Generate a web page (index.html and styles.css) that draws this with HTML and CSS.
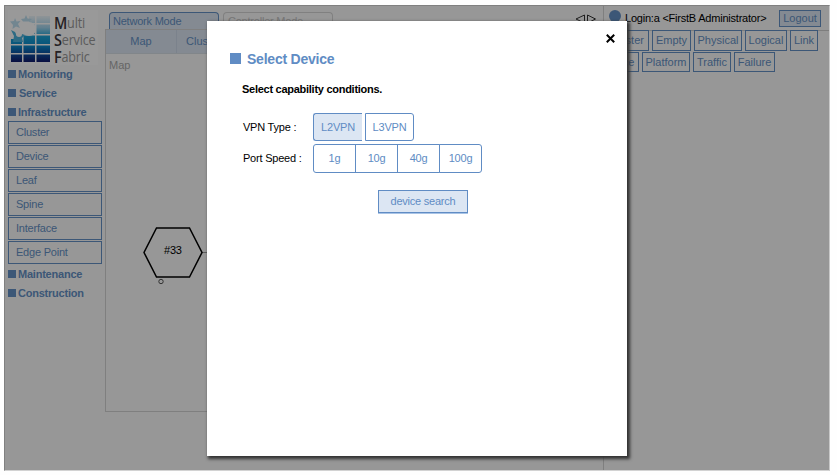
FILE: index.html
```html
<!DOCTYPE html>
<html lang="en">
<head>
<meta charset="utf-8">
<title>Multi Service Fabric</title>
<link rel="stylesheet" href="styles.css">
</head>
<body>
<div class="app">
  <nav class="sidebar">
    <div class="brand">
      <svg class="logo" width="90" height="55" viewBox="0 0 90 55">
        <defs><linearGradient id="g" gradientUnits="userSpaceOnUse" x1="0" y1="6" x2="0" y2="52"><stop offset="0" stop-color="#eef7fc"/><stop offset=".25" stop-color="#a5d6ee"/><stop offset=".45" stop-color="#1ba3d6"/><stop offset=".65" stop-color="#0c8acb"/><stop offset=".8" stop-color="#0d55a5"/><stop offset="1" stop-color="#111a6c"/></linearGradient></defs>
        <rect width="90" height="55" fill="#fff"/>
        <path fill="url(#g)" d="M16 6h11v7H16zM28.500 6H42v7H28.500zM16 14.500h11V24H16zM28.500 14.500H42V24H28.500zM3 25.500h11V34H3zM15.500 25.500H27V34H15.500zM28.500 25.500H42V34H28.500zM3 35.500h11V43H3zM15.500 35.500H27V43H15.500zM28.500 35.500H42V43H28.500zM3 44.500h11V52H3zM15.500 44.500H27V52H15.500zM28.500 44.500H42V52H28.500z"/>
        <path fill="#fff" d="M0 23h14v6H0zM13 4h8v10h-8z"/>
        <circle cx="21" cy="19" r="7" fill="#fff"/>
        <path fill="#bfe0f1" d="M7 8l1.500 3.500 4-.5-2.500 3 2 4-4-1.500-3.500 2.500.5-4L2 11.500l4-.5zM18 5l1.500 3.500L24 9l-3 2.500h-6L13 9l3.500-.5z"/>
        <path fill="#4bb3dc" d="M3 20l4 2 2 4 5-2 3 1-3 3 1 4H5l1-6z"/>
        <circle cx="11" cy="24" r="3" fill="#fff"/>
      </svg>
      <div class="brand-name"><div><b>M</b>ulti</div><div><b>S</b>ervice</div><div><b>F</b>abric</div></div>
    </div>
    <div class="heading">Monitoring</div>
    <div class="heading indent">Service</div>
    <div class="heading">Infrastructure</div>
    <ul class="menu"><li>Cluster</li><li>Device</li><li>Leaf</li><li>Spine</li><li>Interface</li><li>Edge Point</li></ul>
    <div class="heading">Maintenance</div>
    <div class="heading">Construction</div>
  </nav>
  <main class="work">
    <div class="modes"><div class="mode active">Network Mode</div><div class="mode">Controller Mode</div>
      <svg class="arrows" width="22" height="10" viewBox="0 0 22 10"><path d="M9.500 1v8L1 5zM12.500 1v8L20.500 5z" fill="none" stroke="#333"/></svg>
    </div>
    <div class="map">
      <div class="tabs"><div class="tab">Map</div><div class="tab second">Cluster</div></div>
      <div class="map-label">Map</div>
      <svg class="diagram" width="120" height="62" viewBox="0 0 120 62">
        <path d="M60 27.500h60" stroke="#999"/>
        <path d="M14.500 3h33L60 27.500 47.500 52h-33L2 27.500z" fill="none" stroke="#000" stroke-width="1.500"/>
        <text x="22" y="29">#33</text>
        <circle cx="19" cy="56.500" r="2.200" fill="none" stroke="#555"/>
      </svg>
    </div>
  </main>
  <aside class="panel">
    <div class="user"><span class="avatar"></span><span class="login">Login:a &lt;FirstB Administrator&gt;</span><button class="logout">Logout</button></div>
    <div class="filters row-one"><span class="w-cluster">Cluster</span><span class="w-empty">Empty</span><span class="w-physical">Physical</span><span class="w-logical">Logical</span><span class="w-link">Link</span></div>
    <div class="filters row-two"><span class="w-device">Device</span><span class="w-platform">Platform</span><span class="w-traffic">Traffic</span><span class="w-failure">Failure</span></div>
  </aside>
  <div class="shade"></div>
</div>
<section class="dialog">
  <svg class="close" width="9" height="9" viewBox="0 0 9 9"><path d="M.8.8l7.400 7.400M8.200.8L.8 8.200" stroke="#000" stroke-width="2"/></svg>
  <h1>Select Device</h1>
  <h2>Select capability conditions.</h2>
  <div class="field vpn"><label>VPN Type :</label><div class="choices"><button class="on">L2VPN</button><button>L3VPN</button></div></div>
  <div class="field speed"><label>Port Speed :</label><div class="choices"><button>1g</button><button>10g</button><button>40g</button><button>100g</button></div></div>
  <button class="search">device search</button>
</section>
</body>
</html>
```

FILE: styles.css
```css
* { box-sizing: border-box; }
body { margin: 0; width: 837px; height: 475px; overflow: hidden; background: #fefefe; font: 11px/13px "Liberation Sans", Arial, sans-serif; letter-spacing: -.22px; color: #000; }
button { font: inherit; letter-spacing: inherit; padding: 0; margin: 0; }
.app { position: relative; display: flex; width: 826px; height: 466px; margin: 5px 0 0 4px; background: #fcfcfc; border: 1px solid; border-color: #808080 #c8c8c8 #d2d2d2 #808080; overflow: hidden; }
.shade { position: absolute; inset: 0; background: rgba(0, 0, 0, .4); }
.sidebar { width: 100px; flex: none; padding: 4px 0 0 3px; color: #6591c6; }
.brand { display: flex; position: relative; width: 90px; height: 55px; }
.brand-name { position: absolute; left: 46px; top: 4px; color: #999; font: 14px/17px "Open Sans", sans-serif; letter-spacing: -.2px; transform: scaleX(.9); transform-origin: 0 0; }
.brand-name div { display: flex; align-items: center; height: 17px; line-height: 14px; }
.brand-name b { color: #40383c; font-size: 16px; font-weight: 600; }
.heading { display: flex; align-items: center; height: 19px; font-weight: bold; gap: 2px; white-space: nowrap; }
.heading::before { content: ""; width: 8px; height: 8px; margin-top: -1px; background: #6591c6; }
.indent { gap: 3px; }
.menu { list-style: none; margin: -1px 0 0; padding: 0; display: grid; gap: 1px; }
.menu li { width: 94px; height: 23px; border: 1px solid #6591c6; padding: 4px 0 0 7px; }
.menu + .heading { margin-top: 1px; }
.work { width: 498px; flex: none; color: #6591c6; }
.modes { display: flex; height: 23px; padding: 6px 0 0 4px; gap: 4px; position: relative; }
.mode { width: 110px; height: 17px; border: 1px solid #d5d5d5; border-bottom: 0; border-radius: 4px 4px 0 0; color: #c5c5c5; padding: 2px 0 0 4px; line-height: 13px; white-space: nowrap; }
.mode.active { border-color: #6591c6; background: #dce6f3; color: #6591c6; padding-left: 3px; }
.arrows { position: absolute; left: 470px; top: 8px; }
.map { height: 383px; border: 1px solid #d4d4d4; border-right: 0; }
.tabs { display: flex; height: 24px; background: #dce6f3; color: #6591c6; border-bottom: 1px solid #d8dfe7; }
.tab { width: 71px; padding-top: 5px; text-align: center; border-right: 1px solid #cdd9e9; letter-spacing: 0; }
.tab.second { text-align: left; padding-left: 9px; }
.map-label { padding: 5px 0 0 3px; color: #aaa; letter-spacing: 0; }
.diagram { display: block; margin: 153px 0 0 36px; }
.diagram text { font: 11px "Liberation Sans", Arial, sans-serif; }
.panel { flex: 1; border-left: 1px solid #d4d4d4; }
.user { display: flex; height: 25px; padding: 4px 0 0 5px; border-bottom: 1px solid #d0d0d0; white-space: nowrap; }
.avatar { width: 12px; height: 12px; border-radius: 50%; background: #6591c6; }
.login { width: 154px; margin: 2px 0 0 4px; }
.logout { width: 42px; height: 17px; background: #dce6f3; border: 1px solid #6591c6; color: #6591c6; letter-spacing: 0; }
.filters { display: flex; gap: 3px; color: #6591c6; letter-spacing: 0; }
.filters span { height: 20px; border: 1px solid #6591c6; text-align: center; line-height: 18px; overflow: hidden; }
.filters.row-one span { height: 21px; line-height: 19px; }
.row-one { margin: -1px 0 0 0; }
.row-two { margin: 1px 0 0 -8px; }
.w-cluster { width: 45px; }
.w-empty { width: 39px; }
.w-physical { width: 48px; }
.w-logical { width: 42px; }
.w-link { width: 28px; }
.w-device { width: 43px; }
.w-platform { width: 48px; }
.w-traffic { width: 38px; }
.w-failure { width: 41px; }
.dialog { position: absolute; left: 207px; top: 21px; width: 420px; height: 435px; background: #fff; box-shadow: 2px 2px 3px 1px #333; }
.close { position: absolute; left: 399px; top: 13px; }
h1 { display: flex; align-items: center; gap: 6px; margin: 30px 0 0 23px; height: 16px; font-size: 14px; line-height: 16px; color: #608cc4; }
h1::before { content: ""; width: 11px; height: 11px; margin-top: -1px; background: #608cc4; }
h2 { margin: 16px 0 0 35px; font-size: 11px; line-height: 13px; letter-spacing: -.27px; }
.field { display: flex; align-items: center; margin-left: 36px; }
.field label { width: 70px; white-space: nowrap; }
.vpn { margin-top: 17px; }
.speed { margin-top: 3px; }
.choices { display: flex; }
.choices button { height: 28px; color: #608cc4; background: #fff; border: 1px solid #608cc4; }
.choices button:first-child { border-radius: 3px 0 0 3px; }
.choices button:last-child { border-radius: 0 3px 3px 0; }
.vpn .choices { gap: 3px; }
.vpn button { width: 49px; }
.vpn .on { background: #dce6f3; border-right: 0; }
.speed button { width: 43px; height: 29px; }
.speed button + button { margin-left: -1px; }
.search { display: block; width: 90px; height: 23px; margin: 17px 0 0 171px; color: #608cc4; background: #dce6f3; border: 1px solid #608cc4; box-shadow: 0 1px #a9c4e6; }
```
